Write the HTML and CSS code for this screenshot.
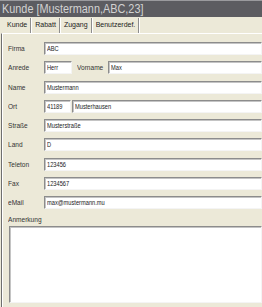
FILE: index.html
```html
<!DOCTYPE html>
<html lang="de">
<head>
    <meta charset="UTF-8">
    <meta name="viewport" content="width=device-width, initial-scale=1.0">
    <title>Kunde</title>
    <link rel="stylesheet" href="styles.css">
</head>
<body>
<div class="window">
    <!-- Titelleiste -->
    <div class="titlebar"><span class="txt">Kunde [Mustermann,ABC,23]</span></div>

    <!-- Reiter -->
    <div class="tabs">
        <span class="tab">Kunde</span>
        <span class="tab">Rabatt</span>
        <span class="tab">Zugang</span>
        <span class="tab">Benutzerdef.</span>
    </div>

    <div class="panel">
        <div class="row">
            <label><span class="txt">Firma</span></label>
            <div class="field wide"><span class="txt">ABC</span></div>
        </div>
        <div class="row">
            <label><span class="txt">Anrede</span></label>
            <div class="field short"><span class="txt">Herr</span></div>
            <label class="inline"><span class="txt">Vorname</span></label>
            <div class="field wide"><span class="txt">Max</span></div>
        </div>
        <div class="row">
            <label><span class="txt">Name</span></label>
            <div class="field wide"><span class="txt">Mustermann</span></div>
        </div>
        <div class="row">
            <label><span class="txt">Ort</span></label>
            <div class="field plz"><span class="txt">41189</span></div>
            <div class="field wide"><span class="txt">Musterhausen</span></div>
        </div>
        <div class="row">
            <label><span class="txt">Straße</span></label>
            <div class="field wide"><span class="txt">Musterstraße</span></div>
        </div>
        <div class="row">
            <label><span class="txt">Land</span></label>
            <div class="field wide"><span class="txt">D</span></div>
        </div>
        <div class="row">
            <label><span class="txt">Teleton</span></label>
            <div class="field wide"><span class="txt">123456</span></div>
        </div>
        <div class="row">
            <label><span class="txt">Fax</span></label>
            <div class="field wide"><span class="txt">1234567</span></div>
        </div>
        <div class="row">
            <label><span class="txt">eMail</span></label>
            <div class="field wide"><span class="txt">max@mustermann.mu</span></div>
        </div>

        <div class="note-label"><span class="txt">Anmerkung</span></div>
        <div class="note"></div>
    </div>
</div>
</body>
</html>
```

FILE: styles.css
```css
body {
    margin: 0;
    background-color: #ece9d8;
    font-family: "Liberation Sans", Arial, sans-serif;
    overflow: hidden;
}
.window {
    width: 262px;
    height: 307px;
    overflow: hidden;
}
/* schmale Schrift wie im Original */
.txt {
    display: inline-block;
    transform-origin: left center;
    white-space: nowrap;
}
.titlebar {
    height: 16px;
    line-height: 16px;
    padding-left: 2px;
    border-top: 1px solid #9a9a9e;
    background-color: #5c5c61;
    color: #d2d2d2;
    font-size: 12.5px;
    white-space: nowrap;
}
.titlebar .txt {
    transform: scaleX(0.87);
}
/* Reiter */
.tabs {
    display: flex;
    height: 15px;
    padding: 1px 0 0 3px;
    font-size: 7px;
    line-height: 14px;
    color: #222;
}
.tab {
    padding: 0 3px 0 4px;
    border-right: 1px solid #8d8d8d;
    box-shadow: 1px 0 0 #fff;
}
/* Inhalt */
.panel {
    height: 280px;
    border-top: 1px solid #fff;
    border-left: 1px solid #6f6f6f;
    box-shadow: inset 1px 0 0 #fff;
    margin-left: 1px;
    padding: 8px 0 0 0;
    box-sizing: border-box;
    display: flex;
    flex-direction: column;
    gap: 6.25px;
}
.row {
    display: flex;
    align-items: center;
    height: 13px;
}
.row label {
    width: 36px;
    padding-left: 6px;
    flex: none;
    font-size: 8px;
    color: #333;
}
.row label .txt,
.note-label .txt {
    transform: scaleX(0.82);
}
.row label.inline {
    width: 31px;
    padding: 0 0 0 5px;
}
.field {
    height: 13px;
    box-sizing: border-box;
    border: 1px solid;
    border-color: #8c8c8c #f4f4f4 #f4f4f4 #8c8c8c;
    box-shadow: inset 1px 1px 0 #c4c4c4;
    background-color: #fff;
    padding-left: 2px;
    font-size: 7.5px;
    line-height: 11px;
    color: #222;
    white-space: nowrap;
    overflow: hidden;
}
.field .txt {
    transform: scaleX(0.76);
}
.field.wide {
    flex: 1;
}
.field.short {
    width: 28px;
    flex: none;
}
.field.plz {
    width: 27px;
    flex: none;
    margin-right: 1px;
}
.note-label {
    padding-left: 6px;
    font-size: 8px;
    color: #333;
}
.note {
    margin: -5px 0 0 7px;
    height: 75px;
    border: 1px solid;
    border-color: #8c8c8c #f4f4f4 #f4f4f4 #8c8c8c;
    box-shadow: inset 1px 1px 0 #c4c4c4;
    background-color: #fff;
}
```
